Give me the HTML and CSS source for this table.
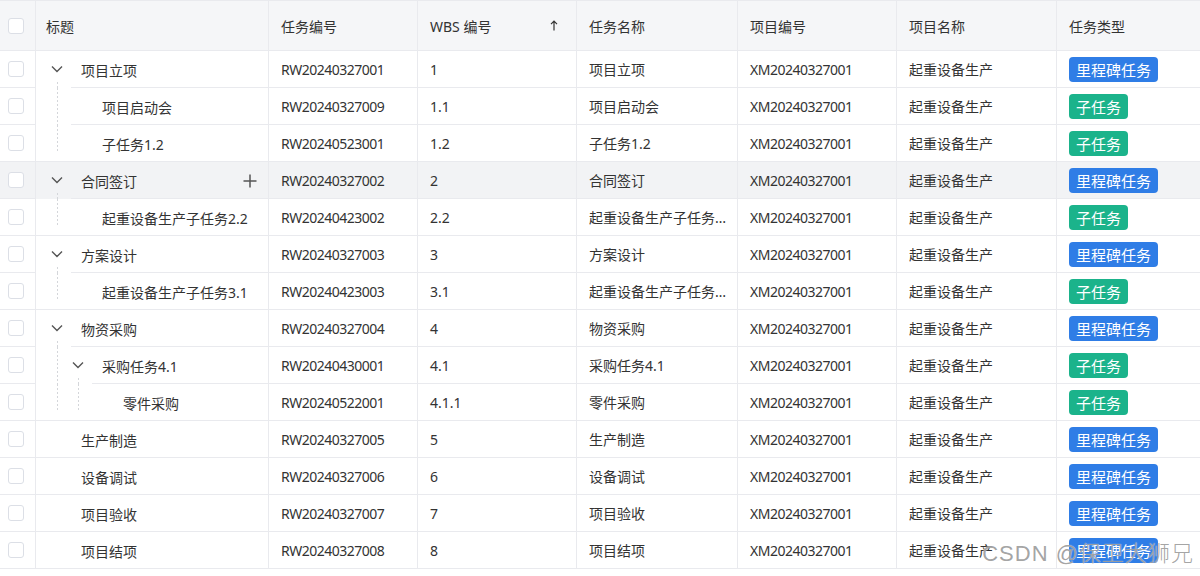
FILE: index.html
```html
<!DOCTYPE html>
<html lang="zh-CN">
<head>
<meta charset="utf-8">
<title>任务列表</title>
<link rel="stylesheet" href="styles.css">
</head>
<body>
<div class="table">
  <div class="row head">
    <div class="cell chk"><span class="box"></span></div>
    <div class="cell">标题</div>
    <div class="cell">任务编号</div>
    <div class="cell sort"><span class="grow">WBS 编号</span><svg class="arrow" width="8" height="11" viewBox="0 0 8 11"><path d="M4 10.5V1.2M1 4.2L4 1.2L7 4.2" fill="none" stroke="#333" stroke-width="1.2"/></svg></div>
    <div class="cell">任务名称</div>
    <div class="cell">项目编号</div>
    <div class="cell">项目名称</div>
    <div class="cell">任务类型</div>
  </div>

  <div class="row">
    <div class="cell chk"><span class="box"></span></div>
    <div class="cell tcell b1"><span class="slot start"><svg class="chev" width="12" height="8" viewBox="0 0 12 8"><path d="M1 1.5L6 6.5L11 1.5" fill="none" stroke="#555" stroke-width="1.4"/></svg></span><span class="label">项目立项</span></div>
    <div class="cell code">RW20240327001</div>
    <div class="cell">1</div>
    <div class="cell name"><span class="ellip">项目立项</span></div>
    <div class="cell code">XM20240327001</div>
    <div class="cell">起重设备生产</div>
    <div class="cell"><span class="tag blue">里程碑任务</span></div>
  </div>

  <div class="row">
    <div class="cell chk"><span class="box"></span></div>
    <div class="cell tcell b1"><span class="slot full"></span><span class="slot"></span><span class="label">项目启动会</span></div>
    <div class="cell code">RW20240327009</div>
    <div class="cell">1.1</div>
    <div class="cell name"><span class="ellip">项目启动会</span></div>
    <div class="cell code">XM20240327001</div>
    <div class="cell">起重设备生产</div>
    <div class="cell"><span class="tag green">子任务</span></div>
  </div>

  <div class="row">
    <div class="cell chk"><span class="box"></span></div>
    <div class="cell tcell"><span class="slot end"></span><span class="slot"></span><span class="label">子任务1.2</span></div>
    <div class="cell code">RW20240523001</div>
    <div class="cell">1.2</div>
    <div class="cell name"><span class="ellip">子任务1.2</span></div>
    <div class="cell code">XM20240327001</div>
    <div class="cell">起重设备生产</div>
    <div class="cell"><span class="tag green">子任务</span></div>
  </div>

  <div class="row hover">
    <div class="cell chk"><span class="box"></span></div>
    <div class="cell tcell b1"><span class="slot start"><svg class="chev" width="12" height="8" viewBox="0 0 12 8"><path d="M1 1.5L6 6.5L11 1.5" fill="none" stroke="#555" stroke-width="1.4"/></svg></span><span class="label">合同签订</span><svg class="plus" width="14" height="14" viewBox="0 0 14 14"><path d="M7 0.5V13.5M0.5 7H13.5" fill="none" stroke="#555" stroke-width="1.5"/></svg></div>
    <div class="cell code">RW20240327002</div>
    <div class="cell">2</div>
    <div class="cell name"><span class="ellip">合同签订</span></div>
    <div class="cell code">XM20240327001</div>
    <div class="cell">起重设备生产</div>
    <div class="cell"><span class="tag blue">里程碑任务</span></div>
  </div>

  <div class="row">
    <div class="cell chk"><span class="box"></span></div>
    <div class="cell tcell"><span class="slot end"></span><span class="slot"></span><span class="label">起重设备生产子任务2.2</span></div>
    <div class="cell code">RW20240423002</div>
    <div class="cell">2.2</div>
    <div class="cell name"><span class="ellip">起重设备生产子任务2.2</span></div>
    <div class="cell code">XM20240327001</div>
    <div class="cell">起重设备生产</div>
    <div class="cell"><span class="tag green">子任务</span></div>
  </div>

  <div class="row">
    <div class="cell chk"><span class="box"></span></div>
    <div class="cell tcell b1"><span class="slot start"><svg class="chev" width="12" height="8" viewBox="0 0 12 8"><path d="M1 1.5L6 6.5L11 1.5" fill="none" stroke="#555" stroke-width="1.4"/></svg></span><span class="label">方案设计</span></div>
    <div class="cell code">RW20240327003</div>
    <div class="cell">3</div>
    <div class="cell name"><span class="ellip">方案设计</span></div>
    <div class="cell code">XM20240327001</div>
    <div class="cell">起重设备生产</div>
    <div class="cell"><span class="tag blue">里程碑任务</span></div>
  </div>

  <div class="row">
    <div class="cell chk"><span class="box"></span></div>
    <div class="cell tcell"><span class="slot end"></span><span class="slot"></span><span class="label">起重设备生产子任务3.1</span></div>
    <div class="cell code">RW20240423003</div>
    <div class="cell">3.1</div>
    <div class="cell name"><span class="ellip">起重设备生产子任务3.1</span></div>
    <div class="cell code">XM20240327001</div>
    <div class="cell">起重设备生产</div>
    <div class="cell"><span class="tag green">子任务</span></div>
  </div>

  <div class="row">
    <div class="cell chk"><span class="box"></span></div>
    <div class="cell tcell b1"><span class="slot start"><svg class="chev" width="12" height="8" viewBox="0 0 12 8"><path d="M1 1.5L6 6.5L11 1.5" fill="none" stroke="#555" stroke-width="1.4"/></svg></span><span class="label">物资采购</span></div>
    <div class="cell code">RW20240327004</div>
    <div class="cell">4</div>
    <div class="cell name"><span class="ellip">物资采购</span></div>
    <div class="cell code">XM20240327001</div>
    <div class="cell">起重设备生产</div>
    <div class="cell"><span class="tag blue">里程碑任务</span></div>
  </div>

  <div class="row">
    <div class="cell chk"><span class="box"></span></div>
    <div class="cell tcell b2"><span class="slot full"></span><span class="slot start"><svg class="chev" width="12" height="8" viewBox="0 0 12 8"><path d="M1 1.5L6 6.5L11 1.5" fill="none" stroke="#555" stroke-width="1.4"/></svg></span><span class="label">采购任务4.1</span></div>
    <div class="cell code">RW20240430001</div>
    <div class="cell">4.1</div>
    <div class="cell name"><span class="ellip">采购任务4.1</span></div>
    <div class="cell code">XM20240327001</div>
    <div class="cell">起重设备生产</div>
    <div class="cell"><span class="tag green">子任务</span></div>
  </div>

  <div class="row">
    <div class="cell chk"><span class="box"></span></div>
    <div class="cell tcell"><span class="slot end"></span><span class="slot end"></span><span class="slot"></span><span class="label">零件采购</span></div>
    <div class="cell code">RW20240522001</div>
    <div class="cell">4.1.1</div>
    <div class="cell name"><span class="ellip">零件采购</span></div>
    <div class="cell code">XM20240327001</div>
    <div class="cell">起重设备生产</div>
    <div class="cell"><span class="tag green">子任务</span></div>
  </div>

  <div class="row">
    <div class="cell chk"><span class="box"></span></div>
    <div class="cell tcell"><span class="slot"></span><span class="label">生产制造</span></div>
    <div class="cell code">RW20240327005</div>
    <div class="cell">5</div>
    <div class="cell name"><span class="ellip">生产制造</span></div>
    <div class="cell code">XM20240327001</div>
    <div class="cell">起重设备生产</div>
    <div class="cell"><span class="tag blue">里程碑任务</span></div>
  </div>

  <div class="row">
    <div class="cell chk"><span class="box"></span></div>
    <div class="cell tcell"><span class="slot"></span><span class="label">设备调试</span></div>
    <div class="cell code">RW20240327006</div>
    <div class="cell">6</div>
    <div class="cell name"><span class="ellip">设备调试</span></div>
    <div class="cell code">XM20240327001</div>
    <div class="cell">起重设备生产</div>
    <div class="cell"><span class="tag blue">里程碑任务</span></div>
  </div>

  <div class="row">
    <div class="cell chk"><span class="box"></span></div>
    <div class="cell tcell"><span class="slot"></span><span class="label">项目验收</span></div>
    <div class="cell code">RW20240327007</div>
    <div class="cell">7</div>
    <div class="cell name"><span class="ellip">项目验收</span></div>
    <div class="cell code">XM20240327001</div>
    <div class="cell">起重设备生产</div>
    <div class="cell"><span class="tag blue">里程碑任务</span></div>
  </div>

  <div class="row">
    <div class="cell chk"><span class="box"></span></div>
    <div class="cell tcell"><span class="slot"></span><span class="label">项目结项</span></div>
    <div class="cell code">RW20240327008</div>
    <div class="cell">8</div>
    <div class="cell name"><span class="ellip">项目结项</span></div>
    <div class="cell code">XM20240327001</div>
    <div class="cell">起重设备生产</div>
    <div class="cell"><span class="tag blue">里程碑任务</span></div>
  </div>
</div>
<div class="watermark">CSDN @保卫大狮兄</div>
</body>
</html>
```

FILE: styles.css
```css
:root {
  --line: #e9eaee;
  --text: #333;
}
html, body {
  margin: 0;
  padding: 0;
  background: #fff;
}
body {
  font-family: "Noto Sans", "Noto Sans CJK SC", sans-serif;
  font-size: 14px;
  color: var(--text);
  width: 1200px;
  height: 576px;
  overflow: hidden;
  position: relative;
}
.table {
  display: flex;
  flex-direction: column;
}
.row {
  display: grid;
  grid-template-columns: 36px 233px 149px 159px 161px 159px 160px 143px;
  height: 37px;
}
.row.head {
  height: 51px;
}
.cell {
  box-sizing: border-box;
  display: flex;
  align-items: center;
  padding: 0 12px;
  border-right: 1px solid var(--line);
  border-bottom: 1px solid var(--line);
  white-space: nowrap;
  overflow: hidden;
  min-width: 0;
}
.cell:last-child {
  border-right: none;
}
.cell.code {
  letter-spacing: -0.5px;
}
.cell.name {
  padding-right: 6px;
}
.head .cell {
  background: #f5f6f8;
  border-top: 1px solid var(--line);
  color: #333;
}
.head .cell:nth-child(2) {
  padding-left: 10px;
}
.row.hover .cell {
  background-color: #f2f3f5;
}
.chk {
  padding: 0 0 0 8px;
}
.box {
  width: 16px;
  height: 16px;
  box-sizing: border-box;
  border: 1px solid #dcdfe6;
  border-radius: 3px;
  background: #fff;
}
.sort .grow {
  flex: 1;
}
.arrow {
  margin-right: 6px;
  margin-top: -1px;
}
.ellip {
  overflow: hidden;
  text-overflow: ellipsis;
  white-space: nowrap;
  min-width: 0;
}
/* tree column */
.tcell {
  --bo: 0px;
  border-bottom: none;
  padding: 0 11px 0 11px;
  align-items: stretch;
  background-image: linear-gradient(var(--line), var(--line));
  background-repeat: no-repeat;
  background-position: right bottom;
  background-size: calc(100% - var(--bo)) 1px;
}
.tcell.b1 { --bo: 35px; }
.tcell.b2 { --bo: 56px; }
.slot {
  flex: none;
  width: 21px;
  display: flex;
  align-items: center;
  justify-content: center;
  background-repeat: no-repeat;
}
.slot.full,
.slot.start,
.slot.end {
  background-image: repeating-linear-gradient(to bottom, #d4d6da 0 2px, transparent 2px 4px);
}
.slot.full {
  background-size: 1px 100%;
  background-position: 10px 0;
}
.slot.start {
  background-size: 1px 6px;
  background-position: 10px bottom;
}
.slot.end {
  background-size: 1px 28px;
  background-position: 10px top;
}
.chev {
  margin-left: -1px;
  margin-top: -1px;
}
.label {
  flex: 1;
  display: flex;
  align-items: center;
  margin-left: 13px;
  overflow: hidden;
  white-space: nowrap;
}
.plus {
  align-self: center;
  flex: none;
  margin-right: 0;
}
.tag {
  display: inline-flex;
  align-items: center;
  height: 25px;
  padding: 0 7px;
  border-radius: 4px;
  font-size: 15px;
  color: #fff;
}
.tag.blue { background: #2f7de6; }
.tag.green { background: #1bb38b; }
.watermark {
  position: absolute;
  right: 6px;
  bottom: 9px;
  font-family: "Liberation Sans", "Noto Sans CJK SC", sans-serif;
  font-size: 22px;
  font-weight: 300;
  color: rgba(140, 140, 140, 0.8);
  text-shadow: 0 0 1px rgba(255, 255, 255, 0.9);
  letter-spacing: 1px;
  white-space: nowrap;
}
```
